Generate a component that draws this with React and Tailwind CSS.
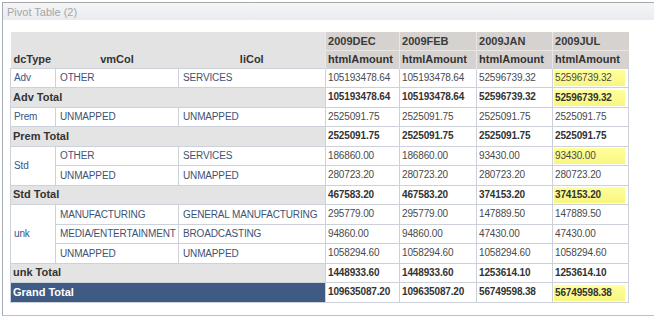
import React from "react";

const rows = [
  { type: "row", dc: "Adv", dcSpan: 1, vm: "OTHER", li: "SERVICES", vals: ["105193478.64", "105193478.64", "52596739.32", "52596739.32"], hl: true },
  { type: "total", label: "Adv Total", vals: ["105193478.64", "105193478.64", "52596739.32", "52596739.32"], hl: true },
  { type: "row", dc: "Prem", dcSpan: 1, vm: "UNMAPPED", li: "UNMAPPED", vals: ["2525091.75", "2525091.75", "2525091.75", "2525091.75"] },
  { type: "total", label: "Prem Total", vals: ["2525091.75", "2525091.75", "2525091.75", "2525091.75"] },
  { type: "row", dc: "Std", dcSpan: 2, vm: "OTHER", li: "SERVICES", vals: ["186860.00", "186860.00", "93430.00", "93430.00"], hl: true },
  { type: "row", vm: "UNMAPPED", li: "UNMAPPED", vals: ["280723.20", "280723.20", "280723.20", "280723.20"] },
  { type: "total", label: "Std Total", vals: ["467583.20", "467583.20", "374153.20", "374153.20"], hl: true },
  { type: "row", dc: "unk", dcSpan: 3, vm: "MANUFACTURING", li: "GENERAL MANUFACTURING", vals: ["295779.00", "295779.00", "147889.50", "147889.50"] },
  { type: "row", vm: "MEDIA/ENTERTAINMENT", li: "BROADCASTING", vals: ["94860.00", "94860.00", "47430.00", "47430.00"] },
  { type: "row", vm: "UNMAPPED", li: "UNMAPPED", vals: ["1058294.60", "1058294.60", "1058294.60", "1058294.60"] },
  { type: "total", label: "unk Total", vals: ["1448933.60", "1448933.60", "1253614.10", "1253614.10"] },
  { type: "grand", label: "Grand Total", vals: ["109635087.20", "109635087.20", "56749598.38", "56749598.38"], hl: true },
];

const months = ["2009DEC", "2009FEB", "2009JAN", "2009JUL"];

function NumCell({ value, bold, hl }) {
  return (
    <td className={`border border-[#cdd2da] p-0 ${bold ? "font-bold text-[#333]" : "text-[#4a4a4a]"}`}>
      {hl ? (
        <div className="ml-[1px] mr-[3px] mt-[1px] bg-gradient-to-b from-[#ffff9c] to-[#f8f680] px-[1px] leading-[16px]">{value}</div>
      ) : (
        <div className="px-[2px] leading-[18px]">{value}</div>
      )}
    </td>
  );
}

export default function App() {
  return (
    <div className="w-[654px] h-[319px] bg-white pt-[2px] pl-[2px] font-['Liberation_Sans',Arial,sans-serif]">
      <div className="h-[314px] border-t border-l border-b border-t-[#a8a8a8] border-l-[#a4acb8] border-b-[#b6c2d2]">
        <div className="h-[17px] bg-gradient-to-b from-[#f4f5f6] to-[#e9ecef] pl-[4px] text-[11px] leading-[18px] text-[#a6a6a6]">
          Pivot Table (2)
        </div>
        <div className="pt-[12px] pl-[7px]">
          <table className="table-fixed border-collapse w-[618px] text-[10px] tracking-[-0.15px]">
            <colgroup>
              <col className="w-[45px]" />
              <col className="w-[123px]" />
              <col className="w-[147px]" />
              <col className="w-[74px]" />
              <col className="w-[77px]" />
              <col className="w-[76px]" />
              <col className="w-[76px]" />
            </colgroup>
            <thead className="tracking-normal">
              <tr className="h-[18px]">
                <th colSpan={3} className="bg-[#e3e3e3] p-0"></th>
                {months.map((m) => (
                  <th key={m} className="bg-[#d5d2cf] border-l border-b border-[#e9e7e5] px-[2px] py-0 text-left text-[11px] font-bold text-[#3a3a3a]">
                    {m}
                  </th>
                ))}
              </tr>
              <tr className="h-[18px]">
                <th className="bg-[#e3e3e3] px-[3px] py-0 text-left text-[11px] font-bold text-[#333]">dcType</th>
                <th className="bg-[#e3e3e3] p-0 text-center text-[11px] font-bold text-[#333]">vmCol</th>
                <th className="bg-[#e3e3e3] p-0 text-center text-[11px] font-bold text-[#333]">liCol</th>
                {months.map((m) => (
                  <th key={m} className="bg-[#d5d2cf] border-l border-[#e9e7e5] px-[2px] py-0 text-left text-[11px] font-bold text-[#333]">
                    htmlAmount
                  </th>
                ))}
              </tr>
            </thead>
            <tbody>
              {rows.map((r, i) => {
                const h = i % 2 === 1 ? "h-[20px]" : "h-[19px]";
                if (r.type === "row") {
                  return (
                    <tr key={i} className={h}>
                      {r.dc && (
                        <td rowSpan={r.dcSpan} className="border border-[#cdd2da] px-[3px] py-0 text-[#3a5482]">
                          {r.dc}
                        </td>
                      )}
                      <td className="border border-[#cdd2da] px-[4px] py-0 text-[#3e5274]">{r.vm}</td>
                      <td className="border border-[#cdd2da] px-[4px] py-0 text-[#3e5274]">{r.li}</td>
                      {r.vals.map((v, j) => (
                        <NumCell key={j} value={v} hl={r.hl && j === 3} />
                      ))}
                    </tr>
                  );
                }
                const grand = r.type === "grand";
                return (
                  <tr key={i} className={h}>
                    <td
                      colSpan={3}
                      className={`border border-[#cdd2da] px-[2px] py-0 text-[11px] tracking-normal font-bold ${
                        grand ? "bg-[#3f5b83] text-white" : "bg-[#e4e4e4] text-[#333]"
                      }`}
                    >
                      {r.label}
                    </td>
                    {r.vals.map((v, j) => (
                      <NumCell key={j} value={v} bold hl={r.hl && j === 3} />
                    ))}
                  </tr>
                );
              })}
            </tbody>
          </table>
        </div>
      </div>
    </div>
  );
}
